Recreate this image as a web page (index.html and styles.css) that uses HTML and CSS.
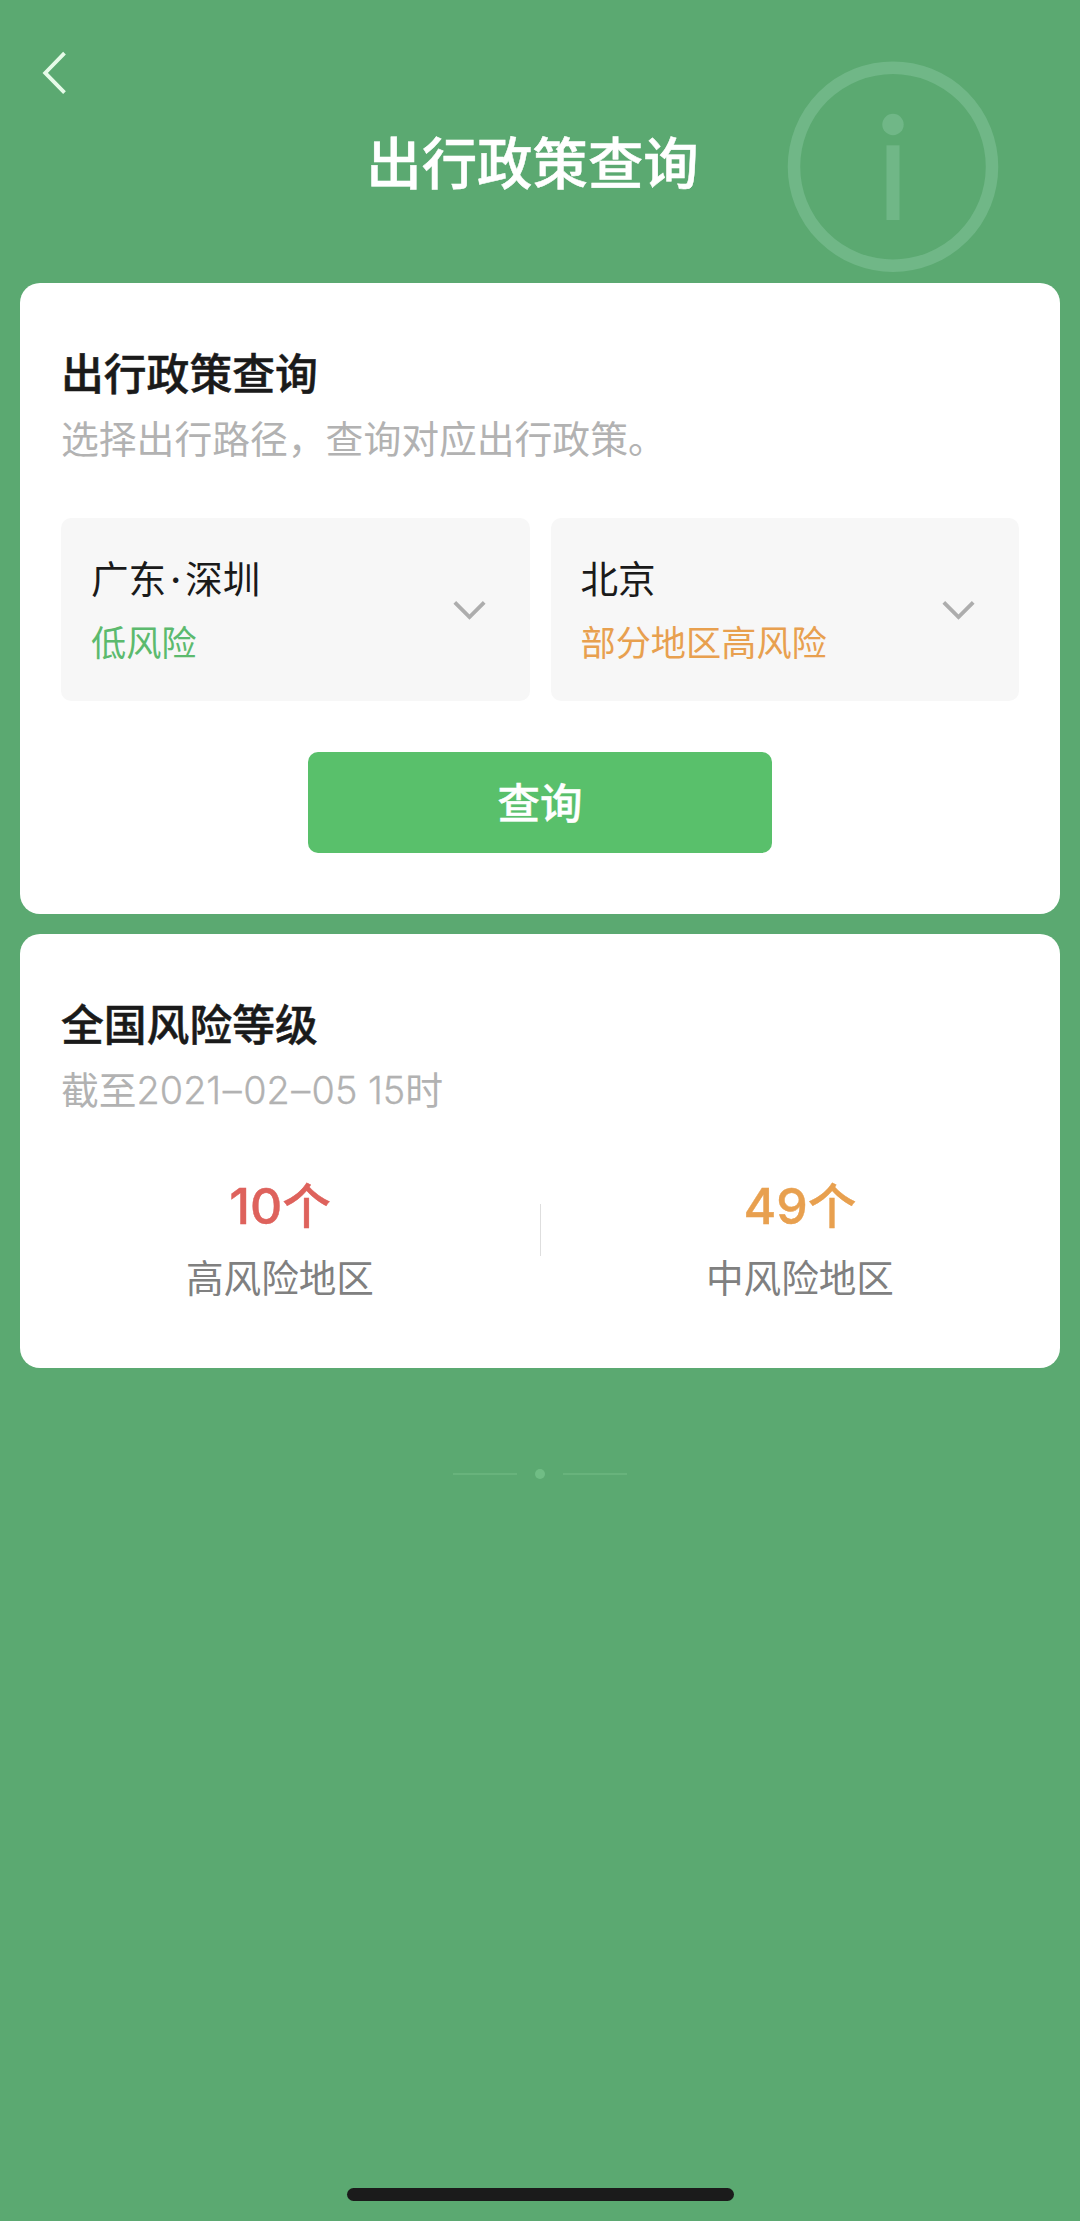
FILE: index.html
```html
<!DOCTYPE html>
<html lang="zh-CN">
<head>
<meta charset="utf-8">
<title>出行政策查询</title>
<link rel="stylesheet" href="styles.css">
</head>
<body>
<div class="page">
  <header class="header">
    <svg class="watermark" width="212" height="212" viewBox="0 0 212 212" aria-hidden="true">
      <circle cx="106" cy="105.7" r="99" fill="none" stroke="currentColor" stroke-width="12.5"/>
      <circle cx="106" cy="63.5" r="10.7" fill="currentColor"/>
      <rect x="99.5" y="84.3" width="13" height="74.7" fill="currentColor"/>
    </svg>
    <svg class="back" width="26" height="44" viewBox="0 0 26 44" aria-label="返回">
      <path d="M22.5 2.2 3.2 21.9 22.5 41.6" fill="none" stroke="currentColor" stroke-width="3.8"/>
    </svg>
    <h1 class="page-title">出行政策查询</h1>
  </header>
  <main class="cards">
    <section class="card query">
      <h2 class="card-title">出行政策查询</h2>
      <p class="card-note">选择出行路径，查询对应出行政策。</p>
      <div class="selects">
        <div class="select">
          <div>
            <div class="place">广东<span class="dot">·</span>深圳</div>
            <div class="risk low">低风险</div>
          </div>
          <svg class="chevron" width="33" height="20" viewBox="0 0 33 20"><path d="M1.8 2.3 16.5 17 31.2 2.3" fill="none" stroke="currentColor" stroke-width="3.8"/></svg>
        </div>
        <div class="select">
          <div>
            <div class="place">北京</div>
            <div class="risk mid">部分地区高风险</div>
          </div>
          <svg class="chevron" width="33" height="20" viewBox="0 0 33 20"><path d="M1.8 2.3 16.5 17 31.2 2.3" fill="none" stroke="currentColor" stroke-width="3.8"/></svg>
        </div>
      </div>
      <button class="submit" type="button">查询</button>
    </section>
    <section class="card levels">
      <h2 class="card-title">全国风险等级</h2>
      <p class="card-note">截至<span class="num">2021<span class="dash">–</span>02<span class="dash">–</span>05 15</span>时</p>
      <div class="stats">
        <div class="stat">
          <div class="count high"><span class="num">10</span>个</div>
          <div class="label">高风险地区</div>
        </div>
        <div class="divider"></div>
        <div class="stat">
          <div class="count mid"><span class="num">49</span>个</div>
          <div class="label">中风险地区</div>
        </div>
      </div>
    </section>
  </main>
  <div class="end-mark"><i class="line"></i><i class="point"></i><i class="line"></i></div>
  <div class="home-bar"></div>
</div>
</body>
</html>
```
FILE: styles.css
```css
* { box-sizing: border-box; }

body {
  margin: 0;
  background: #5ba971;
  font-family: "Noto Sans CJK SC", sans-serif;
  color: #1a1a1a;
}

h1, h2, p { margin: 0; }
svg { display: block; }

.page {
  display: flex;
  flex-direction: column;
  height: 2221px;
  padding-bottom: 20px;
}

.header {
  position: relative;
  height: 283px;
  padding: 51px 15px 0 0;
}

.back {
  margin-left: 42px;
  color: #e6fbe8;
}

.page-title {
  margin-top: 32px;
  font-size: 55.4px;
  line-height: 66px;
  font-weight: 500;
  text-align: center;
  color: #fff;
  -webkit-text-stroke: 0.5px;
}

.watermark {
  position: absolute;
  left: 787px;
  top: 61px;
  color: #70b787;
}

.cards {
  display: flex;
  flex-direction: column;
  gap: 20px;
  padding: 0 20px;
}

.card {
  padding: 58px 41px 0;
  border-radius: 20px;
  background: #fff;
}

.query { height: 631px; }
.levels { height: 434px; }

.card-title {
  font-size: 42.8px;
  line-height: 60px;
  font-weight: 500;
  -webkit-text-stroke: 0.5px;
}

.card-note {
  margin-top: 6px;
  font-size: 37.8px;
  line-height: 60px;
  font-weight: 400;
  color: #b2b2b2;
  white-space: nowrap;
}

.num { font-family: Inter, sans-serif; }
.dash { margin: 0 1.5px; }

.card-note .num {
  font-size: 37.8px;
  font-weight: 300;
  line-height: 1;
  -webkit-text-stroke: 0.3px;
}

.selects {
  display: grid;
  grid-template-columns: 1fr 1fr;
  gap: 21px;
  margin-top: 51px;
}

.select {
  display: flex;
  align-items: center;
  justify-content: space-between;
  height: 183px;
  padding: 0 44px 0 30px;
  border-radius: 10px;
  background: #f7f7f7;
}

.place {
  font-size: 37.6px;
  line-height: 62px;
  font-weight: 400;
}

.dot {
  display: inline-block;
  width: 19px;
  font-family: Inter, sans-serif;
  font-weight: 500;
  line-height: 1;
  text-align: center;
}

.risk {
  padding-top: 1px;
  padding-bottom: 1px;
  font-size: 35.2px;
  line-height: 64px;
  font-weight: 400;
}

.low { color: #5cba6e; }
.mid { color: #e8a04f; }
.high { color: #de625c; }

.chevron { color: #adadad; }

.submit {
  display: block;
  width: 464px;
  height: 101px;
  margin: 51px auto 0;
  padding: 0 0 4px;
  border: 0;
  border-radius: 10px;
  background: #59c06b;
  color: #fff;
  font: 500 42.5px/60px "Noto Sans CJK SC", sans-serif;
  -webkit-text-stroke: 0.4px;
}

.stats {
  display: flex;
  align-items: flex-start;
  justify-content: space-between;
  margin-top: 49px;
}

.stat {
  width: 438px;
  text-align: center;
}

.count {
  font-size: 48.6px;
  line-height: 72px;
  font-weight: 500;
  -webkit-text-stroke: 0.4px;
}

.count .num {
  font-size: 50px;
  line-height: 1;
}

.label {
  margin-top: 1px;
  font-size: 37.6px;
  line-height: 72px;
  font-weight: 400;
  color: #808080;
}

.divider {
  width: 1px;
  height: 52px;
  margin-top: 37px;
  background: #dedede;
}

.end-mark {
  display: flex;
  align-items: center;
  justify-content: center;
  gap: 18px;
  height: 12px;
  margin-top: 100px;
}

.line {
  width: 64px;
  height: 2px;
  background: #68b37c;
}

.point {
  width: 10px;
  height: 10px;
  border-radius: 50%;
  background: #70bd85;
}

.home-bar {
  width: 387px;
  height: 13px;
  margin: auto auto 0;
  border-radius: 7px;
  background: #1b1b1b;
}
```
